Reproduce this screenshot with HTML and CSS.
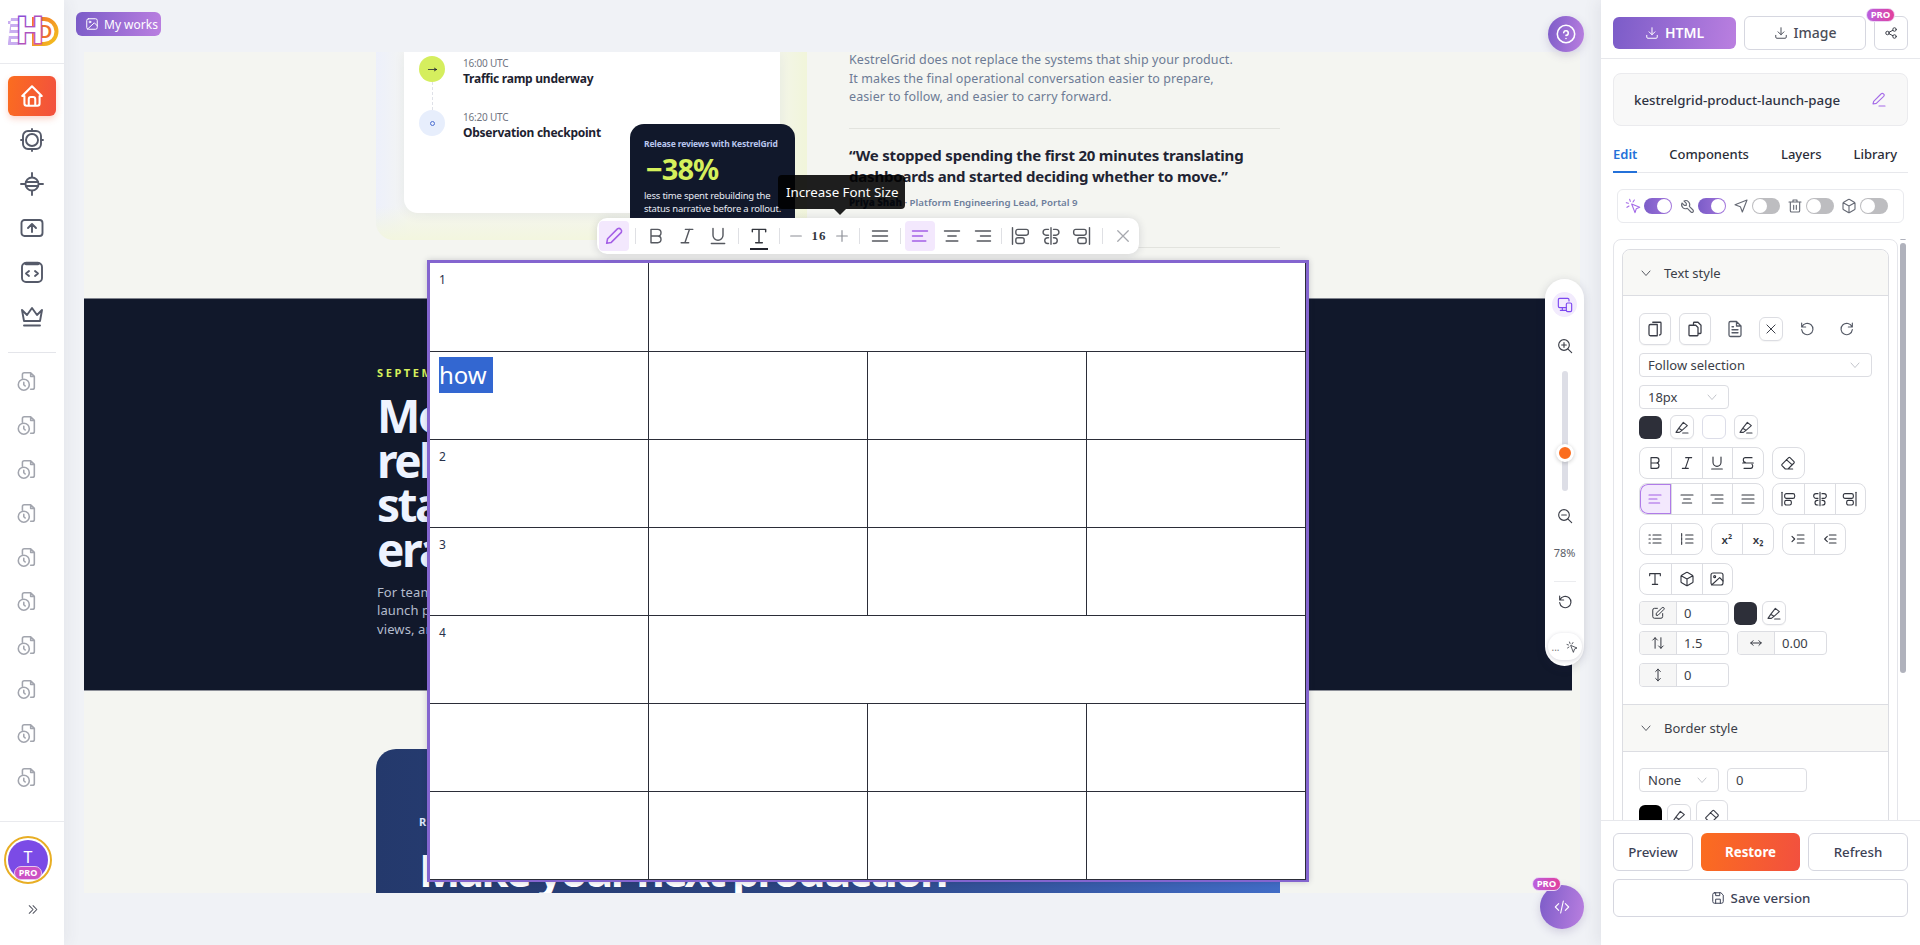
FILE: index.html
```html
<!DOCTYPE html>
<html>
<head>
<meta charset="UTF-8">
<title>kestrelgrid-product-launch-page</title>
<link rel="stylesheet" href="styles.css">
</head>
<body>

<!-- icon sprite -->
<svg class="sprite" xmlns="http://www.w3.org/2000/svg">
	<symbol id="home" viewBox="0 0 24 24"><path d="M5 12H3l9-9 9 9h-2M5 12v7a2 2 0 0 0 2 2h10a2 2 0 0 0 2-2v-7M9 21v-6a2 2 0 0 1 2-2h2a2 2 0 0 1 2 2v6"/></symbol>
	<symbol id="lens" viewBox="0 0 24 24"><rect x="3" y="3" width="18" height="18" rx="5"/><circle cx="12" cy="12" r="6"/><path d="M12 1v2M12 21v2M1 12h2M21 12h2"/></symbol>
	<symbol id="target" viewBox="0 0 24 24"><circle cx="12" cy="12" r="6.500"/><path d="M5.800 10h12.400M5.800 14h12.400M12 1v4M12 19v4M1 12h4M19 12h4"/></symbol>
	<symbol id="upload-box" viewBox="0 0 24 24"><rect x="1.500" y="4" width="21" height="16" rx="3"/><path d="M12 16V9M8 12l4-4 4 4"/></symbol>
	<symbol id="code-box" viewBox="0 0 24 24"><rect x="2" y="3" width="20" height="19" rx="4"/><path class="thick" d="M6 3.500h12"/><path d="M9 11l-3 2.500 3 2.500M15 11l3 2.500-3 2.500"/></symbol>
	<symbol id="crown" viewBox="0 0 24 24"><path d="M2 6l5 5 5-7 5 7 5-5-2 11H4zM4 21.500h16"/></symbol>
	<symbol id="history" viewBox="0 0 24 24"><path d="M7 9V5a2 2 0 0 1 2-2h7l4 4v12a2 2 0 0 1-2 2h-2M16 3v4h4"/><circle cx="8.500" cy="16" r="6"/><path d="M8.500 13.500V16l1.500 1.500"/></symbol>
	<symbol id="chevrons" viewBox="0 0 24 24"><path d="M6 5l7 7-7 7M13 5l7 7-7 7"/></symbol>
	<symbol id="photo" viewBox="0 0 24 24"><rect x="3" y="3" width="18" height="18" rx="3"/><circle cx="8.500" cy="8.500" r="1.500"/><path d="M21 15l-5-5L4 21"/></symbol>
	<symbol id="help" viewBox="0 0 24 24"><circle cx="12" cy="12" r="9.500"/><path d="M12 17v.01M12 13.500a2.500 2.500 0 1 0-2.500-3"/></symbol>
	<symbol id="arrow-right" viewBox="0 0 24 24"><path d="M3 12h18M16 9l5 3-5 3"/></symbol>
	<symbol id="pencil" viewBox="0 0 24 24"><path d="M4 20l1-5L16 4a3 3 0 0 1 4 4L9 19z"/></symbol>
	<symbol id="pencil-line" viewBox="0 0 24 24"><path d="M3 18l1-4L15 3a2.500 2.500 0 0 1 4 3.500L8 17zM12 21h9"/></symbol>
	<symbol id="bold" viewBox="0 0 24 24"><path d="M6 4h8a4 4 0 0 1 0 8H6zM14 12a4 4 0 0 1 0 8H6v-8"/></symbol>
	<symbol id="italic" viewBox="0 0 24 24"><path d="M10 4h9M5 20h9M15 4L9.500 20"/></symbol>
	<symbol id="underline" viewBox="0 0 24 24"><path d="M6 3v8a6 6 0 0 0 12 0V3M4 21h16"/></symbol>
	<symbol id="strike" viewBox="0 0 24 24"><path d="M4 12h16M18 4H8a3 3 0 0 0-3 3v1a3 3 0 0 0 3 3M6 20h10a3 3 0 0 0 3-3v-1a3 3 0 0 0-1-2"/></symbol>
	<symbol id="type" viewBox="0 0 24 24"><path d="M4 7V4h16v3M12 4v16M8 20h8"/></symbol>
	<symbol id="minus" viewBox="0 0 24 24"><path d="M4 12h16"/></symbol>
	<symbol id="plus" viewBox="0 0 24 24"><path d="M12 4v16M4 12h16"/></symbol>
	<symbol id="justify" viewBox="0 0 24 24"><path d="M3 6h18M3 12h18M3 18h18"/></symbol>
	<symbol id="align-left" viewBox="0 0 24 24"><path d="M3 6h18M3 12h12M3 18h16"/></symbol>
	<symbol id="align-center" viewBox="0 0 24 24"><path d="M3 6h18M7 12h10M5 18h14"/></symbol>
	<symbol id="align-right" viewBox="0 0 24 24"><path d="M3 6h18M9 12h12M5 18h16"/></symbol>
	<symbol id="block-left" viewBox="0 0 24 24"><path d="M3 2v20"/><rect x="7" y="4" width="15" height="7" rx="2.500"/><rect x="7" y="14" width="10" height="7" rx="2.500"/></symbol>
	<symbol id="block-center" viewBox="0 0 24 24"><path d="M12 2v20M9 4H6a3.500 3.500 0 0 0 0 7h3M15 4h3a3.500 3.500 0 0 1 0 7h-3M9 14H8a3.500 3.500 0 0 0 0 7h1M15 14h1a3.500 3.500 0 0 1 0 7h-1"/></symbol>
	<symbol id="block-right" viewBox="0 0 24 24"><path d="M21 2v20"/><rect x="2" y="4" width="15" height="7" rx="2.500"/><rect x="7" y="14" width="10" height="7" rx="2.500"/></symbol>
	<symbol id="close" viewBox="0 0 24 24"><path d="M5 5l14 14M19 5L5 19"/></symbol>
	<symbol id="download" viewBox="0 0 24 24"><path d="M3 16v3a2 2 0 0 0 2 2h14a2 2 0 0 0 2-2v-3M7 10l5 5 5-5M12 3v12"/></symbol>
	<symbol id="share" viewBox="0 0 24 24"><circle cx="6" cy="12" r="3"/><circle cx="18" cy="6" r="3"/><circle cx="18" cy="18" r="3"/><path d="M8.700 10.700l6.600-3.400M8.700 13.300l6.600 3.400"/></symbol>
	<symbol id="magic" viewBox="0 0 24 24"><path d="M10 9l12 5-5 2-2 6zM7 2l1 3M2 7l3 1M3 14l3-2M14 3l-2 3"/></symbol>
	<symbol id="wrench" viewBox="0 0 24 24"><path d="M8 11h3V8L7.500 4.500a6 6 0 0 1 8 8l5.500 5.500a2 2 0 0 1-3 3l-5.500-5.500a6 6 0 0 1-8-8z"/></symbol>
	<symbol id="navigate" viewBox="0 0 24 24"><path d="M21 3l-7 18-3-8-8-3z"/></symbol>
	<symbol id="trash" viewBox="0 0 24 24"><path d="M3 6h18M10 11v6M14 11v6M5 6v13a2 2 0 0 0 2 2h10a2 2 0 0 0 2-2V6M9 6V3h6v3"/></symbol>
	<symbol id="cube" viewBox="0 0 24 24"><path d="M21 16V8a2 2 0 0 0-1-1.700l-7-4a2 2 0 0 0-2 0l-7 4A2 2 0 0 0 3 8v8a2 2 0 0 0 1 1.700l7 4a2 2 0 0 0 2 0l7-4a2 2 0 0 0 1-1.700zM12 22V12M12 12l8.700-5M3.300 7L12 12"/></symbol>
	<symbol id="chevron" viewBox="0 0 24 24"><path d="M4 8l8 9 8-9"/></symbol>
	<symbol id="copy" viewBox="0 0 24 24"><path d="M9 3h10a1 1 0 0 1 1 1v14a2 2 0 0 1-2 2M4 8a2 2 0 0 1 2-2h9v15H6a2 2 0 0 1-2-2z"/></symbol>
	<symbol id="paste" viewBox="0 0 24 24"><path d="M10 6V4a1 1 0 0 1 1-1h5l4 4v10a1 1 0 0 1-1 1h-2M5 7h8l3 3v10a1 1 0 0 1-1 1H5a1 1 0 0 1-1-1V8a1 1 0 0 1 1-1z"/></symbol>
	<symbol id="doc" viewBox="0 0 24 24"><path d="M14 2H6a2 2 0 0 0-2 2v16a2 2 0 0 0 2 2h12a2 2 0 0 0 2-2V8zM14 2v6h6M8 13h8M8 17h8M8 9h2"/></symbol>
	<symbol id="undo" viewBox="0 0 24 24"><path d="M4 3v6h6M4.500 9a8.500 8.500 0 1 1-.5 4"/></symbol>
	<symbol id="redo" viewBox="0 0 24 24"><path d="M20 3v6h-6M19.500 9a8.500 8.500 0 1 0 .5 4"/></symbol>
	<symbol id="marker" viewBox="0 0 24 24"><path d="M3 20l4-6 7-9 6 5-8 7-4 3zM7 14l5 3M13 21h8"/></symbol>
	<symbol id="eraser" viewBox="0 0 24 24"><path d="M19 21H8l-5-5a1.500 1.500 0 0 1 0-2L13 4a1.500 1.500 0 0 1 2 0l6 6a1.500 1.500 0 0 1 0 2l-9 9M18 14.500L9.500 7"/></symbol>
	<symbol id="list" viewBox="0 0 24 24"><path d="M9 6h12M9 12h12M9 18h12M3 6h2M3 12h2M3 18h2"/></symbol>
	<symbol id="list-num" viewBox="0 0 24 24"><path d="M10 6h11M10 12h11M10 18h11M4 4v4M4 10v4M4 16v4"/></symbol>
	<symbol id="indent" viewBox="0 0 24 24"><path d="M11 6h10M11 12h10M11 18h10M3 8l4 4-4 4"/></symbol>
	<symbol id="outdent" viewBox="0 0 24 24"><path d="M11 6h10M11 12h10M11 18h10M8 8l-4 4 4 4"/></symbol>
	<symbol id="edit" viewBox="0 0 24 24"><path d="M11 4H6a3 3 0 0 0-3 3v11a3 3 0 0 0 3 3h11a3 3 0 0 0 3-3v-5M19 3a2.100 2.100 0 0 1 3 3l-10 10H9v-3z"/></symbol>
	<symbol id="sort" viewBox="0 0 24 24"><path d="M7 21V3M3 7l4-4 4 4M17 3v18M13 17l4 4 4-4"/></symbol>
	<symbol id="left-right" viewBox="0 0 24 24"><path d="M3 12h18M7 8l-4 4 4 4M17 8l4 4-4 4"/></symbol>
	<symbol id="up-down" viewBox="0 0 24 24"><path d="M12 2v20M8 6l4-4 4 4M8 18l4 4 4-4"/></symbol>
	<symbol id="save" viewBox="0 0 24 24"><path d="M6 3h11l4 4v11a3 3 0 0 1-3 3H6a3 3 0 0 1-3-3V6a3 3 0 0 1 3-3zM8 3v5h7V3M8 21v-7h8v7"/></symbol>
	<symbol id="code" viewBox="0 0 24 24"><path d="M7 7l-5 5 5 5M17 7l5 5-5 5M14 3l-4 18"/></symbol>
	<symbol id="zoom-in" viewBox="0 0 24 24"><circle cx="10.500" cy="10.500" r="8"/><path d="M22 22l-5.800-5.800M7 10.500h7M10.500 7v7"/></symbol>
	<symbol id="zoom-out" viewBox="0 0 24 24"><circle cx="10.500" cy="10.500" r="8"/><path d="M22 22l-5.800-5.800M7 10.500h7"/></symbol>
	<symbol id="devices" viewBox="0 0 24 24"><rect x="14" y="9" width="8" height="13" rx="2"/><path d="M18 6V4a2 2 0 0 0-2-2H4a2 2 0 0 0-2 2v10a2 2 0 0 0 2 2h10M8 16v4M5 20h9"/></symbol>
	<linearGradient id="logo-h" x1="0" x2="1" y1="0" y2="1"><stop offset="0" stop-color="#7b4be0"/><stop offset="1" stop-color="#e2589c"/></linearGradient>
	<linearGradient id="logo-d" x1="0" x2="1" y1="0" y2="1"><stop offset="0" stop-color="#f5762a"/><stop offset="1" stop-color="#f2c01e"/></linearGradient>
</svg>

<div class="app">

	<!-- left menu -->
	<aside class="sidebar">
		<div class="logo">
			<svg class="logo-mark" viewBox="0 0 48 29">
				<path class="logo-stripes" d="M3 1h8v3H0v3h11v3H3v3h8v3H1v3h10v3H3v3h8v3H0v-2z"/>
				<path class="logo-bowl" d="M26 2h10a12.500 12.500 0 0 1 0 25H26z"/>
				<text class="logo-d" x="31" y="21">D</text>
				<text class="logo-h" x="9" y="26">H</text>
			</svg>
		</div>
		<nav class="nav">
			<a class="nav-item"><span class="home-btn"><svg class="ic ic-26"><use href="#home"/></svg></span></a>
			<a class="nav-item"><svg class="ic ic-24"><use href="#lens"/></svg></a>
			<a class="nav-item"><svg class="ic ic-24"><use href="#target"/></svg></a>
			<a class="nav-item"><svg class="ic ic-24"><use href="#upload-box"/></svg></a>
			<a class="nav-item"><svg class="ic ic-24"><use href="#code-box"/></svg></a>
			<a class="nav-item"><svg class="ic ic-24"><use href="#crown"/></svg></a>
			<div class="nav-line"></div>
			<a class="hist-item"><svg class="ic ic-22"><use href="#history"/></svg></a>
			<a class="hist-item"><svg class="ic ic-22"><use href="#history"/></svg></a>
			<a class="hist-item"><svg class="ic ic-22"><use href="#history"/></svg></a>
			<a class="hist-item"><svg class="ic ic-22"><use href="#history"/></svg></a>
			<a class="hist-item"><svg class="ic ic-22"><use href="#history"/></svg></a>
			<a class="hist-item"><svg class="ic ic-22"><use href="#history"/></svg></a>
			<a class="hist-item"><svg class="ic ic-22"><use href="#history"/></svg></a>
			<a class="hist-item"><svg class="ic ic-22"><use href="#history"/></svg></a>
			<a class="hist-item"><svg class="ic ic-22"><use href="#history"/></svg></a>
			<a class="hist-item"><svg class="ic ic-22"><use href="#history"/></svg></a>
		</nav>
		<div class="side-bottom">
			<div class="avatar">
				<span class="avatar-in">T</span>
				<span class="avatar-pro">PRO</span>
			</div>
			<svg class="ic side-more"><use href="#chevrons"/></svg>
		</div>
	</aside>

	<!-- canvas -->
	<main class="main">
		<div class="canvas">

			<section class="release">
				<div class="halo">
					<div class="card">
						<div class="tl-row">
							<div class="tl-col">
								<span class="tl-dot tl-lime"><svg class="ic tl-ic"><use href="#arrow-right"/></svg></span>
								<span class="tl-dash"></span>
							</div>
							<div>
								<div class="tl-time">16:00 UTC</div>
								<div class="tl-title">Traffic ramp underway</div>
							</div>
						</div>
						<div class="tl-row">
							<div class="tl-col">
								<span class="tl-dot tl-pale"><span class="tl-ring"></span></span>
							</div>
							<div>
								<div class="tl-time">16:20 UTC</div>
								<div class="tl-title">Observation checkpoint</div>
							</div>
						</div>
					</div>
				</div>
				<div class="stat">
					<div class="stat-top">Release reviews with KestrelGrid</div>
					<div class="stat-num">−38%</div>
					<div class="stat-txt">less time spent rebuilding the<br>status narrative before a rollout.</div>
				</div>
				<div class="side-copy">
					<p class="copy">KestrelGrid does not replace the systems that ship your product.<br>It makes the final operational conversation easier to prepare,<br>easier to follow, and easier to carry forward.</p>
					<div class="quote">
						<p class="quote-txt">“We stopped spending the first 20 minutes translating dashboards and started deciding whether to move.”</p>
						<p class="quote-by"><b>Priya Shah</b> · Platform Engineering Lead, Portal 9</p>
					</div>
				</div>
			</section>

			<section class="dark">
				<div class="eyebrow">SEPTEMBER</div>
				<h2 class="dark-title">Move<br>release<br>status<br>era</h2>
				<p class="dark-txt">For teams<br>launch plans<br>views, and</p>
			</section>

			<section class="cta">
				<div class="cta-card">
					<div class="cta-eyebrow">READY</div>
					<h2 class="cta-title">Make your next production</h2>
				</div>
			</section>
		</div>

		<a class="my-works"><svg class="ic ic-14"><use href="#photo"/></svg>My works</a>
		<a class="round-btn help-btn"><svg class="ic ic-22"><use href="#help"/></svg></a>

		<!-- table being edited -->
		<div class="edit-box">
			<table class="edit-table">
				<tr><td>1</td><td colspan="3"></td></tr>
				<tr><td><span class="sel">how </span></td><td></td><td></td><td></td></tr>
				<tr><td>2</td><td></td><td></td><td></td></tr>
				<tr><td>3</td><td></td><td></td><td></td></tr>
				<tr><td>4</td><td colspan="3"></td></tr>
				<tr><td></td><td></td><td></td><td></td></tr>
				<tr><td></td><td></td><td></td><td></td></tr>
			</table>
		</div>

		<!-- floating text toolbar -->
		<div class="toolbar">
			<span class="tb-btn on"><svg class="ic ic-22"><use href="#pencil"/></svg></span>
			<i class="tb-sep"></i>
			<span class="tb-btn"><svg class="ic ic-20"><use href="#bold"/></svg></span>
			<span class="tb-btn"><svg class="ic ic-20"><use href="#italic"/></svg></span>
			<span class="tb-btn"><svg class="ic ic-20"><use href="#underline"/></svg></span>
			<i class="tb-sep"></i>
			<span class="tb-btn tb-type"><svg class="ic ic-20"><use href="#type"/></svg></span>
			<i class="tb-sep"></i>
			<span class="tb-step"><svg class="ic ic-16"><use href="#minus"/></svg></span>
			<span class="tb-num">16</span>
			<span class="tb-step"><svg class="ic ic-16"><use href="#plus"/></svg></span>
			<i class="tb-sep"></i>
			<span class="tb-btn"><svg class="ic ic-20"><use href="#justify"/></svg></span>
			<i class="tb-sep"></i>
			<span class="tb-btn on"><svg class="ic ic-20"><use href="#align-left"/></svg></span>
			<span class="tb-btn"><svg class="ic ic-20"><use href="#align-center"/></svg></span>
			<span class="tb-btn"><svg class="ic ic-20"><use href="#align-right"/></svg></span>
			<i class="tb-sep tight"></i>
			<span class="tb-btn"><svg class="ic ic-20"><use href="#block-left"/></svg></span>
			<span class="tb-btn"><svg class="ic ic-20"><use href="#block-center"/></svg></span>
			<span class="tb-btn"><svg class="ic ic-20"><use href="#block-right"/></svg></span>
			<i class="tb-sep"></i>
			<span class="tb-btn tb-close"><svg class="ic ic-18"><use href="#close"/></svg></span>
		</div>
		<div class="tooltip">Increase Font Size</div>

		<!-- zoom rail -->
		<div class="rail">
			<span class="rail-dev"><svg class="ic ic-16"><use href="#devices"/></svg></span>
			<svg class="ic ic-16 rail-in"><use href="#zoom-in"/></svg>
			<div class="rail-track"><span class="rail-thumb"></span></div>
			<svg class="ic ic-16 rail-out"><use href="#zoom-out"/></svg>
			<div class="rail-pct">78%</div>
			<div class="rail-line"></div>
			<svg class="ic ic-16"><use href="#undo"/></svg>
			<div class="rail-pill"><span class="rail-dots">...</span><svg class="ic ic-12"><use href="#magic"/></svg></div>
		</div>

		<a class="round-btn code-btn"><svg class="ic ic-16"><use href="#code"/></svg><span class="pro-tag code-pro">PRO</span></a>
	</main>

	<!-- right panel -->
	<aside class="panel">
		<div class="panel-top">
			<a class="btn-html"><svg class="ic ic-14"><use href="#download"/></svg>HTML</a>
			<a class="btn-image"><svg class="ic ic-14"><use href="#download"/></svg>Image</a>
			<a class="btn-share"><svg class="ic ic-14"><use href="#share"/></svg><span class="pro-tag share-pro">PRO</span></a>
		</div>

		<div class="name-box">
			<span>kestrelgrid-product-launch-page</span>
			<svg class="ic ic-16 purple"><use href="#pencil-line"/></svg>
		</div>

		<div class="tabs">
			<a class="tab active">Edit</a>
			<a class="tab">Components</a>
			<a class="tab">Layers</a>
			<a class="tab">Library</a>
		</div>

		<div class="switches">
			<svg class="ic ic-16 purple"><use href="#magic"/></svg><span class="toggle on"></span>
			<svg class="ic ic-16"><use href="#wrench"/></svg><span class="toggle on"></span>
			<svg class="ic ic-16"><use href="#navigate"/></svg><span class="toggle"></span>
			<svg class="ic ic-16"><use href="#trash"/></svg><span class="toggle"></span>
			<svg class="ic ic-16"><use href="#cube"/></svg><span class="toggle"></span>
		</div>

		<div class="panel-body">
			<div class="scroll-box">
				<div class="acc">
					<div class="acc-head first"><svg class="ic ic-12"><use href="#chevron"/></svg>Text style</div>
					<div class="acc-body text-body">
						<div class="row">
							<span class="ib ib-32"><svg class="ic ic-18"><use href="#copy"/></svg></span>
							<span class="ib ib-32"><svg class="ic ic-18"><use href="#paste"/></svg></span>
							<span class="ib ib-32 plain"><svg class="ic ic-18"><use href="#doc"/></svg></span>
							<span class="ib ib-24"><svg class="ic ic-14"><use href="#close"/></svg></span>
							<span class="ib ib-32 plain"><svg class="ic ic-16"><use href="#undo"/></svg></span>
							<span class="ib ib-32 plain"><svg class="ic ic-16"><use href="#redo"/></svg></span>
						</div>
						<div class="sel-box sel-wide mt8">Follow selection<svg class="ic ic-12"><use href="#chevron"/></svg></div>
						<div class="sel-box sel-90 mt8">18px<svg class="ic ic-12"><use href="#chevron"/></svg></div>
						<div class="row mt6 colors">
							<span class="swatch"></span>
							<span class="ib ib-24"><svg class="ic ic-16"><use href="#marker"/></svg></span>
							<span class="swatch white"></span>
							<span class="ib ib-24"><svg class="ic ic-16"><use href="#marker"/></svg></span>
						</div>
						<div class="row mt8">
							<div class="grp">
								<span><svg class="ic ic-16"><use href="#bold"/></svg></span>
								<span><svg class="ic ic-16"><use href="#italic"/></svg></span>
								<span><svg class="ic ic-16"><use href="#underline"/></svg></span>
								<span><svg class="ic ic-16"><use href="#strike"/></svg></span>
							</div>
							<div class="grp"><span><svg class="ic ic-16"><use href="#eraser"/></svg></span></div>
						</div>
						<div class="row mt4">
							<div class="grp">
								<span class="on"><svg class="ic ic-16"><use href="#align-left"/></svg></span>
								<span><svg class="ic ic-16"><use href="#align-center"/></svg></span>
								<span><svg class="ic ic-16"><use href="#align-right"/></svg></span>
								<span><svg class="ic ic-16"><use href="#justify"/></svg></span>
							</div>
							<div class="grp">
								<span><svg class="ic ic-16"><use href="#block-left"/></svg></span>
								<span><svg class="ic ic-16"><use href="#block-center"/></svg></span>
								<span><svg class="ic ic-16"><use href="#block-right"/></svg></span>
							</div>
						</div>
						<div class="row mt8">
							<div class="grp">
								<span><svg class="ic ic-16"><use href="#list"/></svg></span>
								<span><svg class="ic ic-16"><use href="#list-num"/></svg></span>
							</div>
							<div class="grp">
								<span class="script">x²</span>
								<span class="script">x₂</span>
							</div>
							<div class="grp">
								<span><svg class="ic ic-16"><use href="#indent"/></svg></span>
								<span><svg class="ic ic-16"><use href="#outdent"/></svg></span>
							</div>
						</div>
						<div class="row mt8">
							<div class="grp">
								<span><svg class="ic ic-16"><use href="#type"/></svg></span>
								<span><svg class="ic ic-16"><use href="#cube"/></svg></span>
								<span><svg class="ic ic-16"><use href="#photo"/></svg></span>
							</div>
						</div>
						<div class="row mt6 tight">
							<div class="field"><span class="addon"><svg class="ic ic-14"><use href="#edit"/></svg></span><span class="val">0</span></div>
							<span class="swatch small"></span>
							<span class="ib ib-24"><svg class="ic ic-16"><use href="#marker"/></svg></span>
						</div>
						<div class="row mt6">
							<div class="field"><span class="addon"><svg class="ic ic-14"><use href="#sort"/></svg></span><span class="val">1.5</span></div>
							<div class="field"><span class="addon"><svg class="ic ic-14"><use href="#left-right"/></svg></span><span class="val">0.00</span></div>
						</div>
						<div class="row mt8">
							<div class="field"><span class="addon"><svg class="ic ic-14"><use href="#up-down"/></svg></span><span class="val">0</span></div>
						</div>
					</div>
					<div class="acc-head"><svg class="ic ic-12"><use href="#chevron"/></svg>Border style</div>
					<div class="acc-body border-body">
						<div class="row">
							<div class="sel-box sel-80">None<svg class="ic ic-12"><use href="#chevron"/></svg></div>
							<div class="sel-box sel-80">0</div>
						</div>
						<div class="row mt8 border-tools">
							<span class="swatch black"></span>
							<span class="ib ib-24"><svg class="ic ic-16"><use href="#marker"/></svg></span>
							<span class="ib ib-32"><svg class="ic ic-16"><use href="#eraser"/></svg></span>
						</div>
					</div>
				</div>
			</div>
			<div class="scrollbar"><i class="scroll-up"></i><i class="scroll-thumb"></i></div>
		</div>

		<div class="panel-foot">
			<a class="foot-btn">Preview</a>
			<a class="foot-btn restore">Restore</a>
			<a class="foot-btn">Refresh</a>
			<a class="foot-btn save"><svg class="ic ic-14"><use href="#save"/></svg>Save version</a>
		</div>
	</aside>
</div>

</body>
</html>
```

FILE: styles.css
```css
* {
	box-sizing: border-box;
}

html, body {
	margin: 0;
	padding: 0;
	height: 100%;
	overflow: hidden;
}

body {
	font-family: "Noto Sans", Arial, sans-serif;
	color: #2b2d38;
	background: #f0f2f6;
}

.sprite {
	position: absolute;
	width: 0;
	height: 0;
}

.ic {
	display: block;
	flex: none;
	fill: none;
	stroke: currentColor;
	stroke-width: 1.7;
	stroke-linecap: round;
	stroke-linejoin: round;
}

.thick {
	stroke-width: 3.5;
}

.ic-12 { width: 12px; height: 12px; }
.ic-14 { width: 14px; height: 14px; }
.ic-16 { width: 16px; height: 16px; }
.ic-18 { width: 18px; height: 18px; }
.ic-20 { width: 20px; height: 20px; }
.ic-22 { width: 22px; height: 22px; }
.ic-24 { width: 24px; height: 24px; }
.ic-26 { width: 26px; height: 26px; }

.purple {
	color: #a56be8;
}

.app {
	display: flex;
	height: 945px;
}

/* left menu */
.sidebar {
	width: 64px;
	flex: none;
	display: flex;
	flex-direction: column;
	background: #fff;
	box-shadow: 4px 0 14px rgba(60, 60, 90, .06);
	z-index: 2;
}

.logo {
	height: 64px;
	padding: 17px 8px 0;
	border-bottom: 1px solid #e9eaee;
}

.logo-mark {
	display: block;
	width: 48px;
	height: 29px;
	overflow: visible;
}

.logo-stripes {
	fill: #c9aef0;
}

.logo-bowl {
	fill: #fff;
	stroke: url(#logo-d);
	stroke-width: 4;
}

.logo-h, .logo-d {
	font-family: "Liberation Sans", sans-serif;
	font-weight: 700;
}

.logo-h {
	font-size: 36px;
	fill: #fff;
	stroke: url(#logo-h);
	stroke-width: 3;
	paint-order: stroke;
}

.logo-d {
	font-size: 18px;
	fill: #f0722a;
}

.nav {
	flex: 1;
	padding-top: 10px;
}

.nav-item {
	height: 44px;
	display: flex;
	align-items: center;
	justify-content: center;
	color: #555a69;
}

.nav-item .ic, .side-more {
	stroke-width: 1.900;
}

.home-btn {
	width: 48px;
	height: 40px;
	display: flex;
	align-items: center;
	justify-content: center;
	border-radius: 6px;
	color: #fff;
	background: linear-gradient(100deg, #fb6d1f, #f2503f);
	box-shadow: 0 3px 6px rgba(240, 90, 50, .25);
}

.nav-line {
	height: 1px;
	margin: 14px 8px 6px;
	background: #e4e5ea;
}

.hist-item {
	height: 44px;
	display: flex;
	align-items: center;
	padding-left: 16px;
	color: #a2a5ae;
}

.side-bottom {
	height: 124px;
	padding-top: 14px;
	border-top: 1px solid #e9eaee;
}

.avatar {
	position: relative;
	width: 48px;
	height: 48px;
	margin-left: 4px;
	padding: 2px;
	border: 2px solid #e8ae24;
	border-radius: 50%;
	background: #fff;
}

.avatar-in {
	display: block;
	width: 100%;
	height: 100%;
	padding-top: 6px;
	border-radius: 50%;
	text-align: center;
	font-size: 16px;
	line-height: 22px;
	color: #fff;
	background: #7b4be6;
}

.avatar-pro {
	position: absolute;
	left: 8px;
	top: 28px;
	width: 28px;
	height: 14px;
	border: 1px solid #e6c8ee;
	border-radius: 7px;
	text-align: center;
	font-size: 9px;
	font-weight: 700;
	line-height: 12px;
	color: #fff;
	background: #cb4fc4;
}

.side-more {
	width: 13px;
	height: 13px;
	margin: 19px 0 0 25.500px;
	color: #4d505c;
}

/* canvas and the page inside it */
.main {
	position: relative;
	flex: 1;
	padding: 52px 21px 52px 20px;
}

.canvas {
	height: 841px;
	overflow: hidden;
	background: #f4f5f1;
}

.release {
	position: relative;
	height: 246px;
	display: flex;
	align-items: flex-start;
	padding-left: 292px;
}

.halo {
	width: 431px;
	height: 188px;
	padding: 0 27px 27px 28px;
	border-radius: 0 0 18px 18px;
	background:
		linear-gradient(to top, #f3f6df, rgba(243, 246, 223, 0) 18%),
		linear-gradient(90deg, #edf0fb 0%, #f4f5f1 8%, #f4f5f1 90%, #f1f5da 100%);
}

.card {
	height: 161px;
	padding: 4px 15px;
	border-radius: 0 0 14px 14px;
	background: #fff;
	box-shadow: 0 2px 12px rgba(40, 50, 90, .06);
}

.tl-row {
	display: flex;
	gap: 18px;
	height: 54px;
}

.tl-col {
	width: 26px;
	display: flex;
	flex-direction: column;
	align-items: center;
}

.tl-dot {
	width: 26px;
	height: 26px;
	flex: none;
	display: flex;
	align-items: center;
	justify-content: center;
	border-radius: 50%;
}

.tl-lime {
	background: #d5ee5e;
}

.tl-pale {
	background: #e7eefc;
}

.tl-ic {
	width: 11px;
	height: 11px;
	color: #1b2030;
}

.tl-ring {
	width: 5px;
	height: 5px;
	border: 1px solid #4c6fd0;
	border-radius: 50%;
}

.tl-dash {
	flex: 1;
	border-left: 1px dashed #dfe1e8;
}

.tl-time {
	font-size: 10px;
	line-height: 14px;
	color: #6f7480;
	letter-spacing: -.2px;
}

.tl-title {
	font-size: 12px;
	font-weight: 700;
	line-height: 18px;
	color: #1d2230;
	letter-spacing: -.25px;
}

.stat {
	position: absolute;
	left: 546px;
	top: 72px;
	width: 165px;
	height: 120px;
	padding: 12px 14px;
	border-radius: 14px;
	background: #11182b;
	z-index: 1;
}

.stat-top {
	font-size: 8.500px;
	font-weight: 700;
	line-height: 16px;
	white-space: nowrap;
	color: #b9c6ee;
	letter-spacing: -.15px;
}

.stat-num {
	margin: 1px 0 0 2px;
	font-size: 29px;
	font-weight: 700;
	line-height: 32px;
	color: #d6f05c;
	letter-spacing: -1px;
}

.stat-txt {
	margin-top: 4px;
	font-size: 9.500px;
	line-height: 13px;
	white-space: nowrap;
	color: #e8ebf5;
	letter-spacing: -.2px;
}

.side-copy {
	width: 431px;
	margin-left: 42px;
}

.copy {
	margin: -1px 0 0;
	padding-bottom: 21px;
	border-bottom: 1px solid #e2e3de;
	font-size: 12.500px;
	line-height: 18.500px;
	color: #6d7b95;
	letter-spacing: .1px;
}

.quote {
	height: 103px;
	border-bottom: 1px solid #e2e3de;
}

.quote-txt {
	margin: 16px 0 0;
	font-size: 15px;
	font-weight: 700;
	line-height: 21px;
	color: #1f2433;
	letter-spacing: -.2px;
}

.quote-by {
	margin: 9px 0 0;
	font-size: 9.700px;
	font-weight: 600;
	line-height: 14px;
	color: #6d7e9b;
}

.quote-by b {
	color: #24386e;
}

.dark {
	height: 393px;
	margin-right: 8px;
	padding: 66px 0 0 293px;
	border-top: 1px solid #7f838d;
	border-bottom: 1px solid #8d9099;
	background: #11182b;
}

.eyebrow {
	font-size: 11px;
	font-weight: 700;
	line-height: 16px;
	letter-spacing: 2.600px;
	color: #d6f05c;
}

.dark-title {
	margin: 12px 0 0;
	font-size: 46px;
	font-weight: 700;
	line-height: 44.700px;
	letter-spacing: -2.500px;
	color: #eef3ff;
}

.dark-txt {
	margin: 11px 0 0;
	font-size: 13px;
	line-height: 18.500px;
	color: #b4bccd;
	letter-spacing: .1px;
}

.cta {
	padding: 58px 0 0 292px;
}

.cta-card {
	width: 904px;
	height: 144px;
	padding: 64px 0 0 43px;
	overflow: hidden;
	border-radius: 20px 20px 0 0;
	background: linear-gradient(90deg, #24396c 0%, #2c4583 50%, #416cc6 100%);
}

.cta-eyebrow {
	font-size: 11px;
	font-weight: 700;
	line-height: 18px;
	color: #dfe7fb;
	letter-spacing: 1px;
}

.cta-title {
	margin: 13px 0 0;
	font-size: 44px;
	font-weight: 700;
	line-height: 52px;
	white-space: nowrap;
	color: #fff;
	letter-spacing: -2.800px;
}

/* floating things over the canvas */
.my-works {
	position: absolute;
	left: 12px;
	top: 12px;
	width: 85px;
	height: 24px;
	display: flex;
	align-items: center;
	gap: 5px;
	padding-left: 9px;
	border-radius: 6px;
	font-size: 12px;
	color: #fff;
	background: linear-gradient(100deg, #7b5cc8, #ba7fe0);
}

.round-btn {
	position: absolute;
	display: flex;
	align-items: center;
	justify-content: center;
	border-radius: 50%;
	color: #fff;
	background: linear-gradient(100deg, #7c5cc8, #ba7fe0);
	box-shadow: 0 3px 10px rgba(80, 60, 130, .2);
}

.help-btn {
	left: 1484px;
	top: 16px;
	width: 36px;
	height: 36px;
}

.code-btn {
	left: 1476px;
	top: 885px;
	width: 44px;
	height: 44px;
}

.pro-tag {
	position: absolute;
	width: 29px;
	height: 14px;
	border: 1px solid #ecd6f4;
	border-radius: 7px;
	text-align: center;
	font-size: 9.500px;
	font-weight: 700;
	line-height: 12px;
	color: #fff;
	background: linear-gradient(90deg, #b95fe0, #e2409c);
}

.code-pro {
	left: -8px;
	top: -8px;
}

.edit-box {
	position: absolute;
	left: 363px;
	top: 260px;
	width: 882px;
	height: 622px;
	border: 3px solid #8465cf;
	background: #fff;
	box-shadow: 0 0 6px rgba(30, 30, 60, .2);
}

.edit-table {
	width: 100%;
	border-collapse: collapse;
	table-layout: fixed;
}

.edit-table td {
	height: 88px;
	padding: 8px 9px;
	border: 1px solid #2b2d38;
	vertical-align: top;
	font-size: 12px;
	line-height: 18px;
	color: #28314a;
}

.edit-table td:first-child {
	border-left: none;
}

.edit-table tr:first-child td {
	border-top: none;
}

.edit-table tr:last-child td {
	border-bottom: 1px solid #2b2d38;
}

.sel {
	display: inline-block;
	margin-top: -3px;
	font-size: 24px;
	line-height: 36px;
	white-space: pre;
	color: #fff;
	background: #3367d1;
}

.toolbar {
	position: absolute;
	left: 533px;
	top: 218px;
	width: 542px;
	height: 36px;
	display: flex;
	align-items: center;
	padding-left: 2px;
	border-radius: 10px;
	background: #fff;
	box-shadow: 0 1px 8px rgba(40, 40, 70, .16);
	color: #55585f;
	z-index: 3;
}

.tb-btn {
	width: 31px;
	height: 30px;
	flex: none;
	display: flex;
	align-items: center;
	justify-content: center;
	border-radius: 4px;
}

.tb-btn.on {
	width: 30px;
	margin-right: 1px;
	color: #a45fe6;
	background: #f3e8fd;
}

.tb-type {
	color: #33363d;
	position: relative;
}

.tb-type::after {
	content: "";
	position: absolute;
	left: 7px;
	right: 6px;
	bottom: 1px;
	height: 2px;
	background: #23252e;
}

.tb-close {
	color: #a6a8ae;
}

.tb-sep {
	width: 1px;
	height: 16px;
	flex: none;
	margin: 0 4.500px;
	background: #dfe0e4;
}

.tb-sep.tight {
	margin: 0 2.500px;
}

.tb-step {
	width: 24px;
	height: 30px;
	flex: none;
	display: flex;
	align-items: center;
	justify-content: center;
	color: #8b8e96;
}

.tb-num {
	width: 22px;
	flex: none;
	text-align: center;
	font-family: "Liberation Serif", serif;
	font-size: 13px;
	font-weight: 700;
	letter-spacing: 1px;
	color: #33363d;
}

.tooltip {
	position: absolute;
	left: 714px;
	top: 175px;
	width: 127px;
	height: 34px;
	padding-left: 8px;
	border-radius: 4px;
	font-size: 13.300px;
	line-height: 34px;
	white-space: nowrap;
	color: #fff;
	background: rgba(0, 0, 0, .88);
	z-index: 4;
}

.tooltip::after {
	content: "";
	position: absolute;
	left: 56px;
	top: 34px;
	border: 6px solid transparent;
	border-top-color: rgba(0, 0, 0, .88);
	border-bottom-width: 0;
}

.rail {
	position: absolute;
	left: 1481px;
	top: 279px;
	width: 39px;
	height: 387px;
	display: flex;
	flex-direction: column;
	align-items: center;
	border-radius: 20px;
	background: #fff;
	box-shadow: 0 2px 10px rgba(40, 40, 70, .18);
	color: #3b3e48;
}

.rail-dev {
	width: 25px;
	height: 25px;
	margin-top: 13px;
	display: flex;
	align-items: center;
	justify-content: center;
	border-radius: 50%;
	color: #7d48f0;
	background: #f2ebfd;
}

.rail-in {
	margin-top: 21px;
}

.rail-track {
	position: relative;
	width: 6px;
	height: 120px;
	margin-top: 17px;
	border-radius: 3px;
	background: #dddee6;
}

.rail-thumb {
	position: absolute;
	left: -6px;
	top: 73px;
	width: 18px;
	height: 18px;
	border: 3px solid #fff;
	border-radius: 50%;
	background: #fb6d1f;
	box-shadow: 0 1px 4px rgba(0, 0, 0, .2);
}

.rail-out {
	margin-top: 17px;
}

.rail-pct {
	margin-top: 21px;
	font-size: 11px;
	line-height: 16px;
	color: #5b5e68;
}

.rail-line {
	width: 22px;
	height: 1px;
	margin: 20px 0 12px;
	background: #ebecef;
}

.rail-pill {
	width: 34px;
	height: 27px;
	margin-top: 23px;
	display: flex;
	align-items: center;
	justify-content: center;
	gap: 6px;
	border-radius: 14px;
	font-size: 10px;
	background: #fff;
	box-shadow: 0 1px 4px rgba(40, 40, 70, .2);
}

.rail-dots {
	line-height: 14px;
	color: #777;
}

/* right panel */
.panel {
	width: 319px;
	flex: none;
	display: flex;
	flex-direction: column;
	background: #fff;
	box-shadow: -4px 0 14px rgba(60, 60, 90, .08);
	z-index: 2;
}

.panel-top {
	height: 59px;
	flex: none;
	display: flex;
	align-items: center;
	gap: 8px;
	padding: 7px 12px 0;
	margin-bottom: 14px;
	border-bottom: 1px solid #e7e8ec;
}

.btn-html, .btn-image, .btn-share {
	display: flex;
	align-items: center;
	justify-content: center;
	gap: 6px;
	font-size: 14px;
	font-weight: 600;
	border-radius: 6px;
}

.btn-html {
	width: 123px;
	height: 32px;
	color: #fff;
	background: linear-gradient(100deg, #7b5cc8, #ba7fe0);
}

.btn-image {
	width: 122px;
	height: 34px;
	border: 1px solid #d6d7e0;
	font-weight: 500;
	color: #4a4d58;
}

.btn-share {
	position: relative;
	width: 34px;
	height: 34px;
	border: 1px solid #d6d7e0;
	color: #3c3f49;
}

.share-pro {
	left: -9px;
	top: -9px;
}

.name-box {
	height: 53px;
	margin: 0 12px;
	flex: none;
	display: flex;
	align-items: center;
	justify-content: space-between;
	padding: 0 20px;
	border: 1px solid #ebebee;
	border-radius: 8px;
	background: #f8f8f8;
	font-size: 13.300px;
	font-weight: 500;
	color: #2f3343;
}

.tabs {
	height: 47px;
	margin: 0 12px;
	flex: none;
	display: flex;
	align-items: flex-end;
	gap: 32px;
	border-bottom: 1px solid #e7e8ec;
}

.tab {
	height: 29px;
	margin-bottom: -1px;
	font-size: 13px;
	font-weight: 500;
	line-height: 20px;
	color: #2b2d38;
}

.tab.active {
	font-weight: 600;
	color: #2471d9;
	border-bottom: 2px solid #2471d9;
}

.switches {
	height: 34px;
	margin: 16px 16px 0;
	flex: none;
	display: flex;
	align-items: center;
	padding-left: 7px;
	border: 1px solid #e9eaee;
	border-radius: 6px;
	color: #666a75;
}

.toggle {
	position: relative;
	width: 28px;
	height: 16px;
	margin: 0 7px 0 3px;
	flex: none;
	border-radius: 8px;
	background: #bdbdc0;
}

.toggle::after {
	content: "";
	position: absolute;
	left: 1px;
	top: 1px;
	width: 14px;
	height: 14px;
	border-radius: 50%;
	background: #fff;
}

.toggle.on {
	background: linear-gradient(90deg, #7b5cc8, #a477dc);
}

.toggle.on::after {
	left: 13px;
}

.panel-body {
	position: relative;
	flex: 1;
	min-height: 0;
	overflow: hidden;
	display: flex;
	padding-left: 12px;
	margin-top: 16px;
}

.scroll-box {
	width: 285px;
	height: 700px;
	padding: 9px 8px 0;
	border: 1px solid #e4e5ea;
	border-radius: 8px 8px 0 0;
}

.acc {
	border: 1px solid #dcdde2;
	border-radius: 8px 8px 0 0;
}

.acc-head {
	height: 48px;
	display: flex;
	align-items: center;
	gap: 12px;
	padding-left: 17px;
	border-top: 1px solid #dcdde2;
	border-bottom: 1px solid #dcdde2;
	background: #f8f8f6;
	font-size: 13px;
	color: #3b3e48;
}

.acc-head.first {
	height: 46px;
	border-top: none;
	border-radius: 8px 8px 0 0;
}

.acc-body {
	padding: 17px 16px 16px;
}

.text-body {
	padding-bottom: 17px;
}

.border-body {
	padding-top: 16px;
}

.row {
	display: flex;
	align-items: center;
	gap: 8px;
}

.mt4 { margin-top: 4px; }
.mt6 { margin-top: 6px; }
.mt8 { margin-top: 8px; }

.ib {
	flex: none;
	display: flex;
	align-items: center;
	justify-content: center;
	border: 1px solid #dcdde2;
	border-radius: 6px;
	background: #fff;
	color: #3b3e48;
	box-shadow: 0 1px 1px rgba(0, 0, 0, .04);
}

.ib-32 { width: 32px; height: 32px; }
.ib-24 { width: 24px; height: 24px; }

.ib.plain {
	border: none;
	box-shadow: none;
	color: #555a66;
}

.sel-box {
	height: 24px;
	display: flex;
	align-items: center;
	justify-content: space-between;
	padding: 0 10px 0 8px;
	border: 1px solid #dcdde2;
	border-radius: 4px;
	font-size: 13px;
	color: #3b3e48;
}

.sel-box .ic {
	color: #b8bac2;
}

.sel-wide { width: 233px; }
.sel-90 { width: 90px; }
.sel-80 { width: 80px; }

.swatch {
	width: 23px;
	height: 23px;
	flex: none;
	border-radius: 6px;
	background: #2d2f39;
}

.swatch.white {
	width: 24px;
	height: 24px;
	border: 1px solid #dcdde8;
	background: #fff;
}

.swatch.black {
	background: #000;
}

.grp {
	display: flex;
	border: 1px solid #dcdde2;
	border-radius: 8px;
	overflow: hidden;
}

.grp span {
	width: 30.750px;
	height: 30px;
	display: flex;
	align-items: center;
	justify-content: center;
	color: #33363f;
}

.grp span + span {
	border-left: 1px solid #dcdde2;
}

.grp span.on {
	color: #a45fe6;
	background: #f3e8fd;
	box-shadow: inset 0 0 0 1px #b07be8;
	border-radius: 8px 0 0 8px;
}

.grp .script {
	font-size: 11.500px;
	font-weight: 600;
}

.field {
	width: 90px;
	height: 24px;
	display: flex;
	border: 1px solid #dcdde2;
	border-radius: 4px;
	overflow: hidden;
	font-size: 13px;
	color: #3b3e48;
}

.addon {
	width: 37px;
	display: flex;
	align-items: center;
	justify-content: center;
	border-right: 1px solid #dcdde2;
	background: #f6f6f6;
	color: #33363f;
}

.val {
	padding-left: 7px;
	line-height: 22px;
}

.row.tight {
	gap: 5px;
}

.border-tools {
	gap: 5px;
}

.scrollbar {
	width: 6px;
	margin-left: 2px;
	margin-top: -3px;
}

.scroll-up {
	display: block;
	border: 3px solid transparent;
	border-bottom: 4px solid #b0b2bc;
	border-top-width: 0;
}

.scroll-thumb {
	display: block;
	height: 430px;
	margin-top: 3px;
	border-radius: 3px;
	background: #b0b2bc;
}

.panel-foot {
	height: 125px;
	flex: none;
	display: grid;
	grid-template-columns: 80px 99px 100px;
	grid-template-rows: 38px 38px;
	gap: 8px;
	padding: 12px 12px 0;
	border-top: 1px solid #e7e8ec;
	background: #fff;
}

.foot-btn {
	display: flex;
	align-items: center;
	justify-content: center;
	gap: 6px;
	border: 1px solid #d6d7e0;
	border-radius: 6px;
	font-size: 13.300px;
	font-weight: 500;
	color: #3d4256;
}

.foot-btn.restore {
	border: none;
	font-weight: 700;
	color: #fff;
	background: linear-gradient(100deg, #fb6d1f, #f2503f);
}

.foot-btn.save {
	grid-column: 1 / 4;
}
```
